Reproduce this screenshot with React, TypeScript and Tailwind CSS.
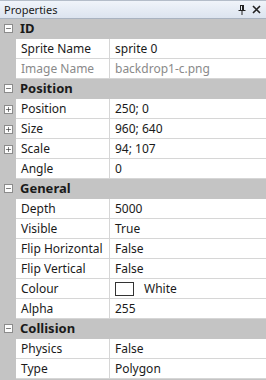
import { Minus, Plus } from 'lucide-react'

type Row = { name: string; value: string; expand?: boolean; disabled?: boolean; colour?: boolean }
type Group = { title: string; rows: Row[] }

const groups: Group[] = [
  {
    title: 'ID',
    rows: [
      { name: 'Sprite Name', value: 'sprite 0' },
      { name: 'Image Name', value: 'backdrop1-c.png', disabled: true },
    ],
  },
  {
    title: 'Position',
    rows: [
      { name: 'Position', value: '250; 0', expand: true },
      { name: 'Size', value: '960; 640', expand: true },
      { name: 'Scale', value: '94; 107', expand: true },
      { name: 'Angle', value: '0' },
    ],
  },
  {
    title: 'General',
    rows: [
      { name: 'Depth', value: '5000' },
      { name: 'Visible', value: 'True' },
      { name: 'Flip Horizontal', value: 'False' },
      { name: 'Flip Vertical', value: 'False' },
      { name: 'Colour', value: 'White', colour: true },
      { name: 'Alpha', value: '255' },
    ],
  },
  {
    title: 'Collision',
    rows: [
      { name: 'Physics', value: 'False' },
      { name: 'Type', value: 'Polygon' },
    ],
  },
]

function BoxIcon({ open }: { open: boolean }) {
  return (
    <div className="w-[9px] h-[9px] border border-[#8c8c8c] bg-[#fcfcfc] flex items-center justify-center">
      {open ? (
        <Minus className="w-[7px] h-[7px] text-[#222]" strokeWidth={2} />
      ) : (
        <Plus className="w-[7px] h-[7px] text-[#222]" strokeWidth={2} />
      )}
    </div>
  )
}

export default function App() {
  return (
    <div
      className="w-[266px] h-[380px] overflow-hidden bg-[#c4c4c4] text-[12px] text-[#1a1a1a]"
      style={{ fontFamily: '"Noto Sans", "Open Sans", sans-serif' }}
    >
      {/* Title bar */}
      <div className="h-[19px] flex items-center justify-between pl-[4px] pr-[5px] bg-gradient-to-b from-[#f0f4fa] to-[#dce4ef] border-t border-[#b4bdc9] border-b border-b-[#a9b3c0]">
        <span className="leading-none text-[11px]">Properties</span>
        <div className="flex items-center gap-[6px]">
          <svg width="8" height="10" viewBox="0 0 8 10" className="text-[#222]">
            <path d="M2 0.5h4M2.5 0.5v5M5.5 0.5v5M0.5 5.5h7M4 5.5v4.5" stroke="currentColor" strokeWidth="1" fill="none" />
            <path d="M4.5 0.5v5" stroke="currentColor" strokeWidth="1" />
          </svg>
          <svg width="9" height="9" viewBox="0 0 9 9" className="text-[#222]">
            <path d="M1 1l7 7M8 1l-7 7" stroke="currentColor" strokeWidth="1.6" />
          </svg>
        </div>
      </div>

      {groups.map((group) => (
        <div key={group.title}>
          <div className="h-[20px] flex items-center border-b border-[#c4c4c4]">
            <div className="w-[16px] flex justify-center">
              <BoxIcon open />
            </div>
            <span className="pl-[4px] font-bold text-[13px] leading-none">{group.title}</span>
          </div>
          {group.rows.map((row) => (
            <div key={row.name} className="h-[20px] flex">
              <div className="w-[16px] flex items-center justify-center">
                {row.expand && <BoxIcon open={false} />}
              </div>
              <div className="flex-1 flex bg-white border-b border-[#d6d6d6]">
                <div
                  className={`w-[94px] flex items-center pl-[5px] border-r border-[#d6d6d6] ${
                    row.disabled ? 'text-[#8a8a8a]' : ''
                  }`}
                >
                  {row.name}
                </div>
                <div
                  className={`flex-1 flex items-center pl-[5px] ${row.disabled ? 'text-[#8a8a8a]' : ''}`}
                >
                  {row.colour && (
                    <span className="w-[19px] h-[14px] border border-[#333] bg-white mr-[10px]" />
                  )}
                  {row.value}
                </div>
              </div>
            </div>
          ))}
        </div>
      ))}
    </div>
  )
}
